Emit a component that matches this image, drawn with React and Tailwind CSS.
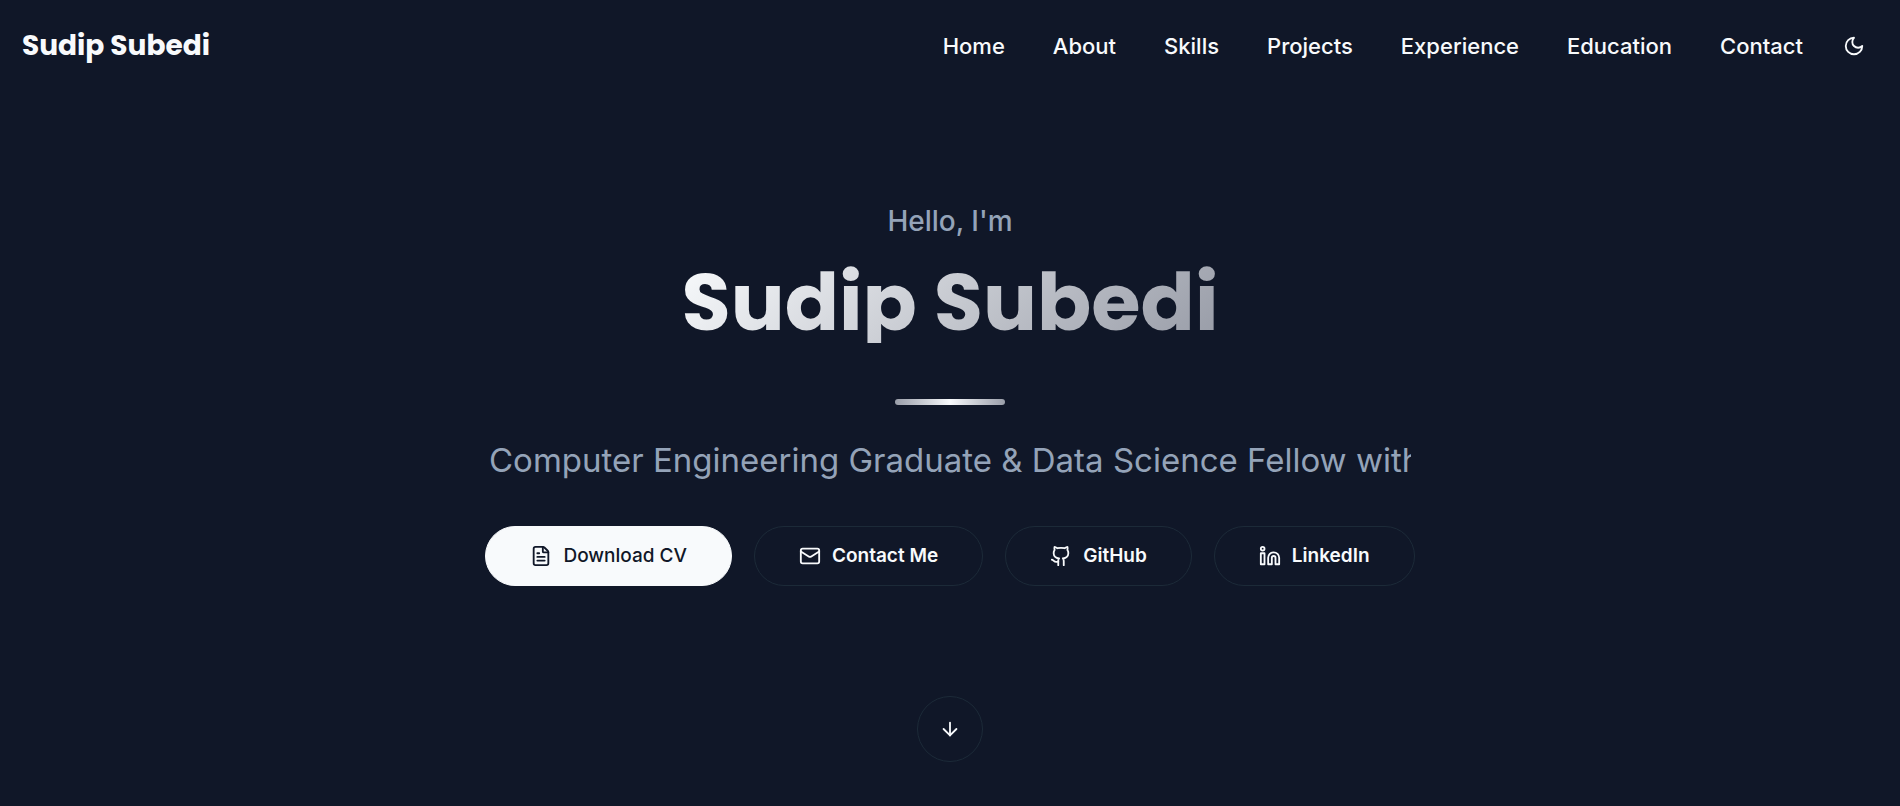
import React from 'react';
import { ArrowDown, FileText, Github, Linkedin, Mail } from 'lucide-react';

const links = ['Home', 'About', 'Skills', 'Projects', 'Experience', 'Education', 'Contact'];

const pill =
  'flex h-[60px] items-center justify-center gap-[11px] rounded-full border px-11 text-[19px]';

function MoonIcon() {
  return (
    <svg
      width="22"
      height="22"
      viewBox="0 0 24 24"
      fill="none"
      stroke="currentColor"
      strokeWidth="2"
      strokeLinecap="round"
      strokeLinejoin="round"
      aria-hidden="true"
    >
      <path d="M12 3a6 6 0 0 0 9 9 9 9 0 1 1-9-9Z" />
    </svg>
  );
}

function OutlineLink({ icon: Icon, children }) {
  return (
    <a href="#contact" className={`${pill} border-[#1c2a38] font-semibold`}>
      <Icon size={22} strokeWidth={2} aria-hidden="true" />
      {children}
    </a>
  );
}

export default function App() {
  return (
    <div className="flex min-h-screen flex-col bg-[#101728] font-['Inter',sans-serif] text-[#f8fafc]">
      <header className="flex items-center justify-between py-6 pr-[35px] pl-[22px]">
        <a href="#home" className="font-['Poppins','Inter',sans-serif] text-[28px] leading-[44px] font-bold">
          Sudip Subedi
        </a>
        <div className="flex items-center gap-10">
          <nav className="flex items-center gap-12 text-[22px] leading-[33px] font-medium">
            {links.map((name) => (
              <a key={name} href={`#${name.toLowerCase()}`}>
                {name}
              </a>
            ))}
          </nav>
          <button type="button" aria-label="Toggle theme">
            <MoonIcon />
          </button>
        </div>
      </header>

      <main className="flex flex-1 flex-col items-center pt-[109px] pb-11">
        <p className="text-[28px] leading-10 font-medium text-[#94a3b8]">Hello, I&apos;m</p>
        <h1 className="mt-5 bg-linear-135 from-[#f8fafc] to-[#989ca7] bg-clip-text font-['Poppins','Inter',sans-serif] text-[80px] leading-[82px] font-bold text-transparent">
          Sudip Subedi
        </h1>
        <div className="mt-14 h-1.5 w-[110px] rounded-full bg-linear-to-r from-[#9a9ea9] via-[#f8fafc] to-[#9a9ea9]" />
        <p className="mt-[30px] w-[922px] max-w-full overflow-hidden text-[33px] leading-[50px] whitespace-nowrap text-[#94a3b8]">
          Computer Engineering Graduate &amp; Data Science Fellow with
        </p>
        <div className="mt-[41px] flex flex-wrap justify-center gap-[22px]">
          <a href="#cv" className={`${pill} border-[#f8fafc] bg-[#f8fafc] font-medium text-[#101728]`}>
            <FileText size={22} aria-hidden="true" />
            Download CV
          </a>
          <OutlineLink icon={Mail}>Contact Me</OutlineLink>
          <OutlineLink icon={Github}>GitHub</OutlineLink>
          <OutlineLink icon={Linkedin}>LinkedIn</OutlineLink>
        </div>
        <a
          href="#about"
          aria-label="Scroll down"
          className="mt-auto flex size-[66px] items-center justify-center rounded-full border border-[#1c2a38]"
        >
          <ArrowDown size={22} aria-hidden="true" />
        </a>
      </main>
    </div>
  );
}
